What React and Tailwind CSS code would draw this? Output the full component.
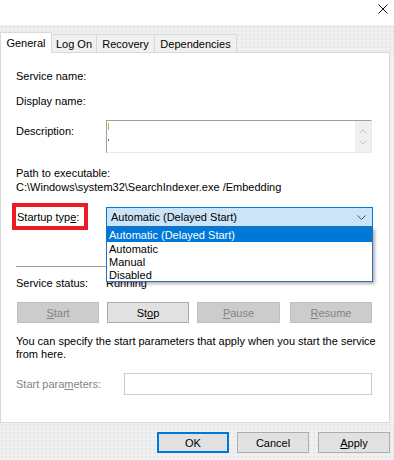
import React from "react";

const U = ({ children }) => <span className="underline underline-offset-[1px]">{children}</span>;

function Btn({ children, disabled, w = "w-[82px]", primary, className = "" }) {
  return (
    <div
      className={
        "h-[21px] flex items-center justify-center " +
        w +
        " " +
        (disabled
          ? "bg-[#cccccc] border border-[#bfbfbf] text-[#838383] "
          : primary
          ? "bg-[#e1e1e1] border-2 border-[#0078d7] text-black "
          : "bg-[#e1e1e1] border border-[#adadad] text-black ") +
        className
      }
    >
      {children}
    </div>
  );
}

export default function App() {
  return (
    <div
      className="w-[394px] h-[460px] bg-[#f0f0f0] overflow-hidden text-[11px] leading-[14px] text-black flex flex-col"
      style={{ fontFamily: '"Liberation Sans", Arial, sans-serif' }}
    >
      {/* title bar */}
      <div className="h-[25px] bg-white flex justify-end items-start pr-[6px] pt-[4px]">
        <svg width="10" height="10" viewBox="0 0 10 10" className="mt-[0px]">
          <path d="M0.5 0.5 L9.5 9.5 M9.5 0.5 L0.5 9.5" stroke="#111" strokeWidth="1" fill="none" />
        </svg>
      </div>

      {/* tab strip */}
      <div className="h-[27px] flex items-end bg-[radial-gradient(circle,#e0e0e0_0.6px,transparent_0.9px)] bg-[length:4px_4px]">
        <div className="relative z-10 -mb-px h-[21px] w-[52px] bg-white border-t border-l border-r border-[#d9d9d9] flex items-center justify-center pb-[1px]">
          General
        </div>
        <div className="h-[18px] w-[45px] bg-[#f0f0f0] border-t border-r border-[#d9d9d9] flex items-center justify-center">
          Log On
        </div>
        <div className="h-[18px] w-[58px] bg-[#f0f0f0] border-t border-r border-[#d9d9d9] flex items-center justify-center">
          Recovery
        </div>
        <div className="h-[18px] w-[82px] bg-[#f0f0f0] border-t border-r border-[#d9d9d9] flex items-center justify-center">
          Dependencies
        </div>
      </div>

      {/* panel */}
      <div className="h-[371px] w-[390px] bg-white border border-[#d9d9d9] pl-[15px] pt-[16px] flex flex-col">
        <div className="h-[14px]">Service name:</div>
        <div className="h-[14px] mt-[11px]">Display name:</div>

        <div className="mt-[12px] flex h-[33px]">
          <div className="w-[90px] pt-[4px]">Description:</div>
          <div className="w-[266px] h-[33px] border-t border-l border-[#a0a0a0] border-r border-b border-r-[#e8e8e8] border-b-[#e8e8e8] flex">
            <div className="flex-1 relative">
              <div className="absolute left-[1px] top-[2px] w-[1px] h-[7px] bg-[#e8a040]" />
              <div className="absolute left-[1px] top-[18px] w-[1px] h-[2px] bg-[#c0392b]" />
            </div>
            <div className="w-[16px] bg-[#f0f0f0] flex flex-col items-center justify-center gap-[6px]">
              <svg width="8" height="5" viewBox="0 0 8 5">
                <path d="M0.5 4.5 L4 1 L7.5 4.5" stroke="#c4c4c4" fill="none" />
              </svg>
              <svg width="8" height="5" viewBox="0 0 8 5">
                <path d="M0.5 0.5 L4 4 L7.5 0.5" stroke="#c4c4c4" fill="none" />
              </svg>
            </div>
          </div>
        </div>

        <div className="h-[14px] mt-[13px]">Path to executable:</div>
        <div className="h-[14px]">C:\Windows\system32\SearchIndexer.exe /Embedding</div>

        <div className="mt-[13px] flex h-[20px]">
          <div className="w-[90px] relative flex items-center pl-[1px]">
            <span>
              Startup typ<U>e</U>:
            </span>
            <div className="absolute left-[-4px] top-[-4px] w-[76px] h-[27px] border-4 border-[#ed1c24]" />
          </div>
          <div className="relative w-[267px] h-[20px]">
            <div className="h-full border border-[#0078d7] bg-[#cce4f7] flex items-center justify-between pl-[4px] pr-[6px]">
              <span>Automatic (Delayed Start)</span>
              <svg width="9" height="5" viewBox="0 0 9 5">
                <path d="M0.5 0.5 L4.5 4.5 L8.5 0.5" stroke="#555" fill="none" />
              </svg>
            </div>
            <div className="absolute left-0 top-[20px] w-[267px] bg-white border border-[#2a6fbf] shadow-[2px_2px_3px_rgba(0,0,0,0.3)] z-20 flex flex-col">
              <div className="h-[14px] bg-[#0078d7] text-white pl-[2px] flex items-center">Automatic (Delayed Start)</div>
              <div className="h-[13px] pl-[2px] flex items-center">Automatic</div>
              <div className="h-[13px] pl-[2px] flex items-center">Manual</div>
              <div className="h-[13px] pl-[2px] flex items-center">Disabled</div>
            </div>
          </div>
        </div>

        <div className="mt-[39px] h-[1px] w-[357px] bg-[#a0a0a0]" />

        <div className="mt-[9px] h-[14px] flex">
          <div className="w-[90px]">Service status:</div>
          <div>Running</div>
        </div>

        <div className="mt-[12px] flex pl-[1px]">
          <Btn disabled>
            <span>
              <U>S</U>tart
            </span>
          </Btn>
          <Btn className="ml-[8px]">
            <span>
              St<U>o</U>p
            </span>
          </Btn>
          <Btn disabled w="w-[83px]" className="ml-[8px]">
            <span>
              <U>P</U>ause
            </span>
          </Btn>
          <Btn disabled className="ml-[10px]">
            <span>
              <U>R</U>esume
            </span>
          </Btn>
        </div>

        <div className="mt-[12px] leading-[13px]">
          You can specify the start parameters that apply when you start the service
          <br />
          from here.
        </div>

        <div className="mt-[12px] flex h-[22px]">
          <div className="w-[108px] flex items-center text-[#838383]">
            <span>
              Start para<U>m</U>eters:
            </span>
          </div>
          <div className="w-[248px] h-[22px] border border-[#cccccc] bg-white" />
        </div>
      </div>

      {/* footer */}
      <div className="flex-1 flex items-start pt-[9px] pl-[157px] bg-[radial-gradient(circle,#e0e0e0_0.6px,transparent_0.9px)] bg-[length:4px_4px]">
        <Btn primary w="w-[72px]">OK</Btn>
        <Btn w="w-[72px]" className="ml-[8px]">Cancel</Btn>
        <Btn w="w-[72px]" className="ml-[9px]">
          <span>
            <U>A</U>pply
          </span>
        </Btn>
      </div>
    </div>
  );
}
